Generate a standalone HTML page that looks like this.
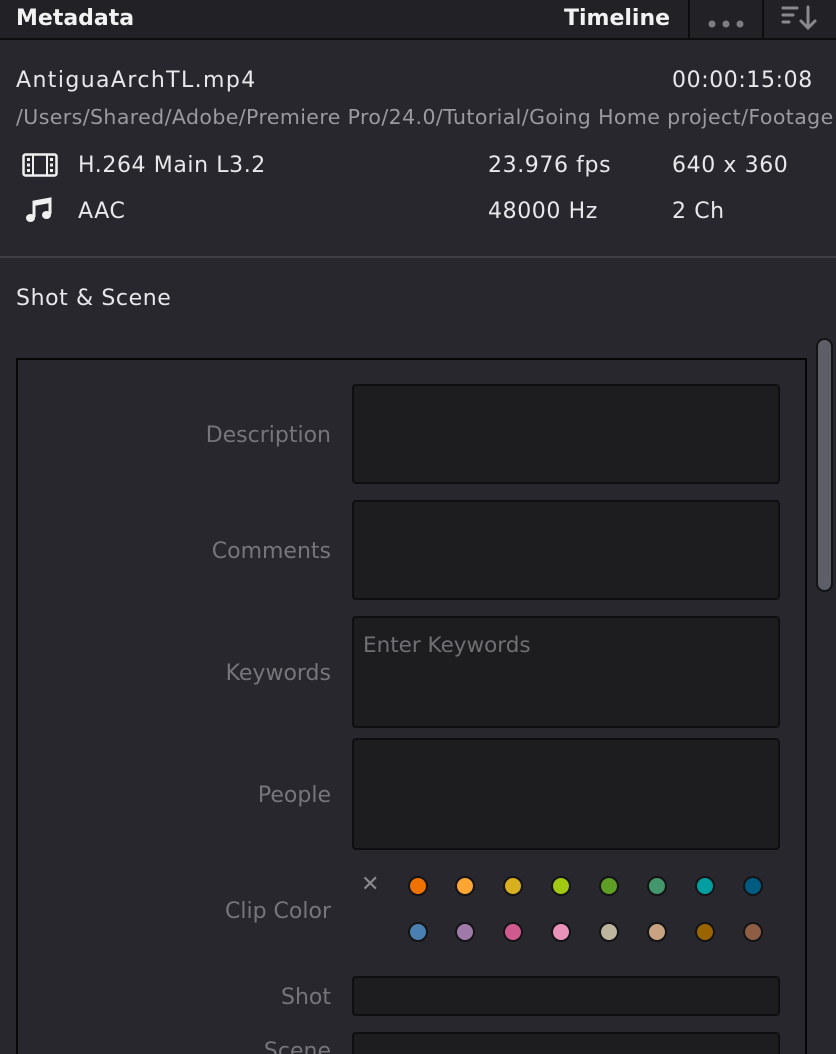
<!DOCTYPE html>
<html style="overflow:hidden;height:1054px"><head><style>
*{margin:0;padding:0;box-sizing:border-box}
body{width:836px;height:1054px;overflow:hidden;background:#28272e;font-family:"DejaVu Sans","Liberation Sans",sans-serif;color:#e8e8ea;position:relative}
.a{position:absolute;white-space:nowrap}
.hdr{left:0;top:0;width:836px;height:40px;background:#222126;border-bottom:2px solid #0e0e10}
.lbl{color:#76767a;font-size:22px;text-align:right;width:331px;left:0}
.fld{position:absolute;left:352px;width:428px;background:#1d1d1f;border:2px solid #0f0f11;border-radius:4px}
.dot{position:absolute;width:20px;height:20px;border-radius:50%;border:2px solid #141416}
.t{font-size:22px;letter-spacing:.6px}
</style></head><body>
<div class="a hdr"></div>
<div class="a" style="left:16px;top:6px;font-size:22px;font-weight:bold;color:#f2f2f2">Metadata</div>
<div class="a" style="left:564px;top:6px;font-size:22px;font-weight:bold;color:#f2f2f2">Timeline</div>
<div class="a" style="left:688px;top:0;width:2px;height:40px;background:#0e0e10"></div>
<div class="a" style="left:762px;top:0;width:2px;height:40px;background:#0e0e10"></div>
<div class="a" style="left:708px;top:13px;width:38px;height:8px">
<svg width="38" height="8"><circle cx="4" cy="4" r="3.5" fill="#7e7e82"/><circle cx="18" cy="4" r="3.5" fill="#7e7e82"/><circle cx="32" cy="4" r="3.5" fill="#7e7e82"/></svg></div>
<svg class="a" style="left:780px;top:4px" width="40" height="30"><g stroke="#8a8a8e" stroke-width="3" stroke-linecap="round" fill="none"><path d="M3 4h14M3 11h10M3 18h6"/><path d="M28 3v21M21 17l7 7 7-7"/></g></svg>

<div class="a t" style="left:16px;top:68px;letter-spacing:1.4px">AntiguaArchTL.mp4</div>
<div class="a t" style="left:672px;top:68px">00:00:15:08</div>
<div class="a" style="left:16px;top:105px;font-size:20.5px;letter-spacing:.4px;color:#9a9aa0">/Users/Shared/Adobe/Premiere Pro/24.0/Tutorial/Going Home project/Footage</div>
<svg class="a" style="left:22px;top:153px" width="36" height="24"><rect x="1.5" y="1.5" width="33" height="21" rx="2" fill="none" stroke="#f0f0f0" stroke-width="2.5"/><g fill="#f0f0f0"><rect x="5" y="5" width="3" height="3"/><rect x="5" y="10.5" width="3" height="3"/><rect x="5" y="16" width="3" height="3"/><rect x="28" y="5" width="3" height="3"/><rect x="28" y="10.5" width="3" height="3"/><rect x="28" y="16" width="3" height="3"/></g><path d="M11 2v20M25 2v20" stroke="#f0f0f0" stroke-width="2"/></svg>
<div class="a t" style="left:78px;top:153px">H.264 Main L3.2</div>
<div class="a t" style="left:488px;top:153px">23.976 fps</div>
<div class="a t" style="left:672px;top:153px">640 x 360</div>
<svg class="a" style="left:25px;top:197px" width="30" height="28"><path d="M9 20V5l16-3v15" stroke="#f0f0f0" stroke-width="3" fill="none"/><path d="M9 5l16-3v4L9 9z" fill="#f0f0f0"/><ellipse cx="5.5" cy="21" rx="4.5" ry="4" fill="#f0f0f0"/><ellipse cx="21.5" cy="18" rx="4.5" ry="4" fill="#f0f0f0"/></svg>
<div class="a t" style="left:78px;top:199px">AAC</div>
<div class="a t" style="left:488px;top:199px">48000 Hz</div>
<div class="a t" style="left:672px;top:199px">2 Ch</div>
<div class="a" style="left:0;top:256px;width:836px;height:2px;background:#3e3d44"></div>
<div class="a t" style="left:16px;top:286px">Shot &amp; Scene</div>
<div class="a" style="left:816px;top:338px;width:17px;height:254px;background:#5d5f67;border:2px solid #141416;border-radius:9px"></div>
<div class="a" style="left:16px;top:358px;width:791px;height:700px;border:2px solid #060607"></div>

<div class="a lbl" style="top:423px">Description</div>
<div class="fld" style="top:384px;height:100px"></div>
<div class="a lbl" style="top:539px">Comments</div>
<div class="fld" style="top:500px;height:100px"></div>
<div class="a lbl" style="top:661px">Keywords</div>
<div class="fld" style="top:616px;height:112px"><div class="a" style="left:9px;top:15px;font-size:21.5px;color:#707074">Enter Keywords</div></div>
<div class="a lbl" style="top:783px">People</div>
<div class="fld" style="top:738px;height:112px"></div>
<div class="a lbl" style="top:899px">Clip Color</div>
<div class="a" style="left:361px;top:872px;font-size:22px;color:#8a8a8e">✕</div>
<div class="dot" style="left:408px;top:876px;background:#ef7100"></div>
<div class="dot" style="left:455px;top:876px;background:#ffa534"></div>
<div class="dot" style="left:503px;top:876px;background:#d7af1f"></div>
<div class="dot" style="left:551px;top:876px;background:#a1c912"></div>
<div class="dot" style="left:599px;top:876px;background:#5e9e24"></div>
<div class="dot" style="left:647px;top:876px;background:#44976c"></div>
<div class="dot" style="left:695px;top:876px;background:#009ea0"></div>
<div class="dot" style="left:743px;top:876px;background:#005b80"></div>
<div class="dot" style="left:408px;top:922px;background:#4a80b1"></div>
<div class="dot" style="left:455px;top:922px;background:#9f7aa8"></div>
<div class="dot" style="left:503px;top:922px;background:#d05a8e"></div>
<div class="dot" style="left:551px;top:922px;background:#ea92b9"></div>
<div class="dot" style="left:599px;top:922px;background:#bdb59d"></div>
<div class="dot" style="left:647px;top:922px;background:#c9a381"></div>
<div class="dot" style="left:695px;top:922px;background:#9a6400"></div>
<div class="dot" style="left:743px;top:922px;background:#8d5e43"></div>
<div class="a lbl" style="top:985px">Shot</div>
<div class="fld" style="top:976px;height:40px"></div>
<div class="a lbl" style="top:1039px">Scene</div>
<div class="fld" style="top:1032px;height:40px"></div>
</body></html>
